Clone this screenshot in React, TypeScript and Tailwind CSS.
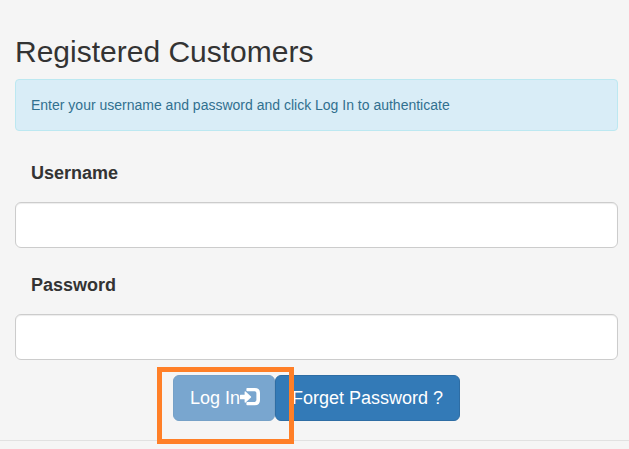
function LogInIcon() {
  return (
    <svg className="-mt-[2px] h-[18px] w-[18px] shrink-0 overflow-visible" viewBox="0 0 18 18" aria-hidden="true">
      <path d="M0.6 6.7H4.6V3.9Q4.8 3 5.6 3.6L11 8.6Q11.4 9 11 9.4L5.6 14.4Q4.8 15 4.6 14.1V11.3H0.6Q0 11.3 0 10.7V7.3Q0 6.7 0.6 6.7Z" fill="#fff" />
      <path
        d="M7.2 0H14.8Q20 0 20 5V12.2Q20 17.2 14.8 17.2H7.2Q6.4 17.2 6.4 16.4V14.7Q6.4 13.9 7.2 13.9H14.6Q16.4 13.9 16.4 12.1V5.1Q16.4 3.3 14.6 3.3H7.2Q6.4 3.3 6.4 2.5V0.8Q6.4 0 7.2 0Z"
        fill="#fff"
      />
    </svg>
  );
}

function Field({ id, label, type }: { id: string; label: string; type: string }) {
  return (
    <div className="flex h-[97px] flex-col justify-between">
      <label htmlFor={id} className="pl-4 pt-2.5 text-[18px] font-bold leading-6">
        {label}
      </label>
      <input
        id={id}
        type={type}
        className="h-[46px] w-full rounded-md border border-[#ccc] bg-white px-4 text-[18px] shadow-[inset_0_1px_1px_rgba(0,0,0,0.075)] outline-none"
      />
    </div>
  );
}

export default function App() {
  return (
    <main className="h-[449px] w-full overflow-hidden bg-[#f5f5f5] pt-[35px] text-[#333] [font-family:'Liberation_Sans',Arial,sans-serif]">
      <div className="pl-[15px] pr-[11px]">
        <h2 className="text-[30px] leading-[33px]">Registered Customers</h2>
        <div className="mt-[11px] h-[52px] rounded border border-[#bce8f1] bg-[#d9edf7] px-[15px] py-[15px] text-[14px] leading-5 text-[#31708f]">
          Enter your username and password and click Log In to authenticate
        </div>
        <form className="mt-5">
          <div className="flex flex-col gap-[15px]">
            <Field id="username" label="Username" type="text" />
            <Field id="password" label="Password" type="password" />
          </div>
          <div className="mt-[15px] flex justify-center">
            <div className="relative flex text-[18px] leading-6 text-white">
              <button
                type="button"
                disabled
                className="flex h-[46px] w-[102px] items-center whitespace-nowrap rounded-md border border-[#76a1c7] bg-[#79a6cf] px-4"
              >
                Log In
                <LogInIcon />
              </button>
              <button
                type="button"
                className="h-[46px] w-[185px] whitespace-nowrap rounded-md border border-[#2e6da4] bg-[#337ab7] px-4 text-left"
              >
                Forget Password ?
              </button>
              <div className="pointer-events-none absolute -left-4 -top-2 h-[77px] w-[137px] border-5 border-[#ff7f27]" />
            </div>
          </div>
        </form>
      </div>
      <hr className="mt-[19px] border-t border-[#e1e1e1]" />
    </main>
  );
}
